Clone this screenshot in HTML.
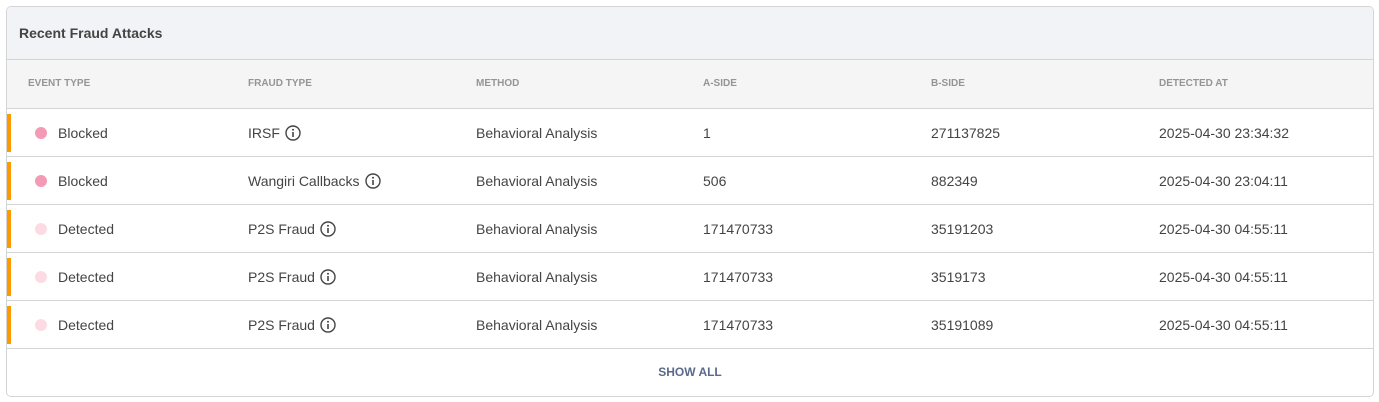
<!DOCTYPE html><html><head><style>
body{margin:0;background:#fff;font-family:"Liberation Sans",sans-serif;}
.card{position:absolute;left:6px;top:6px;width:1366px;height:389px;border:1px solid #d4d4d4;border-radius:5px;overflow:hidden;background:#fff}
.hd{height:52px;background:#f2f3f6;border-bottom:1px solid #d4d4d4;font-size:14px;font-weight:bold;color:#444;line-height:52px;padding-left:12px}
.th{position:relative;height:48px;background:#f5f5f5;border-bottom:1px solid #d4d4d4;font-size:10px;font-weight:bold;color:#959595}
.th span,.r span{position:absolute;top:0;line-height:48px}
.r{position:relative;height:47px;border-bottom:1px solid #d4d4d4;font-size:14px;color:#444}
.bar{position:absolute;left:0;top:5px;width:4px;height:38px;background:#f90}
.dot{position:absolute;left:28px;top:18px;width:12px;height:12px;border-radius:50%}
.i{display:inline-block;vertical-align:-3px;margin-left:5px}
.ft{text-align:center;line-height:46px;font-size:12px;font-weight:bold;color:#5a6a8a}
</style></head><body><div class="card">
<div class="hd">Recent Fraud Attacks</div>
<div class="th"><span style="left:21px">EVENT TYPE</span><span style="left:241px">FRAUD TYPE</span><span style="left:469px">METHOD</span><span style="left:696px">A-SIDE</span><span style="left:924px">B-SIDE</span><span style="left:1152px">DETECTED AT</span></div>
<svg width="0" height="0" style="position:absolute"><defs><symbol id="ic" viewBox="0 0 16 16"><circle cx="8" cy="8" r="7" fill="none" stroke="#444" stroke-width="1.4"/><circle cx="8" cy="4.8" r="1" fill="#444"/><path d="M8 7v5" stroke="#444" stroke-width="1.6"/></symbol></defs></svg>
<div class="r"><div class="bar"></div><div class="dot" style="background:#f59ab5"></div><span style="left:51px">Blocked</span><span style="left:241px">IRSF<svg class="i" width="16" height="16"><use href="#ic"/></svg></span><span style="left:469px">Behavioral Analysis</span><span style="left:696px">1</span><span style="left:924px">271137825</span><span style="left:1152px">2025-04-30 23:34:32</span></div>
<div class="r"><div class="bar"></div><div class="dot" style="background:#f59ab5"></div><span style="left:51px">Blocked</span><span style="left:241px">Wangiri Callbacks<svg class="i" width="16" height="16"><use href="#ic"/></svg></span><span style="left:469px">Behavioral Analysis</span><span style="left:696px">506</span><span style="left:924px">882349</span><span style="left:1152px">2025-04-30 23:04:11</span></div>
<div class="r"><div class="bar"></div><div class="dot" style="background:#fcdbe5"></div><span style="left:51px">Detected</span><span style="left:241px">P2S Fraud<svg class="i" width="16" height="16"><use href="#ic"/></svg></span><span style="left:469px">Behavioral Analysis</span><span style="left:696px">171470733</span><span style="left:924px">35191203</span><span style="left:1152px">2025-04-30 04:55:11</span></div>
<div class="r"><div class="bar"></div><div class="dot" style="background:#fcdbe5"></div><span style="left:51px">Detected</span><span style="left:241px">P2S Fraud<svg class="i" width="16" height="16"><use href="#ic"/></svg></span><span style="left:469px">Behavioral Analysis</span><span style="left:696px">171470733</span><span style="left:924px">3519173</span><span style="left:1152px">2025-04-30 04:55:11</span></div>
<div class="r"><div class="bar"></div><div class="dot" style="background:#fcdbe5"></div><span style="left:51px">Detected</span><span style="left:241px">P2S Fraud<svg class="i" width="16" height="16"><use href="#ic"/></svg></span><span style="left:469px">Behavioral Analysis</span><span style="left:696px">171470733</span><span style="left:924px">35191089</span><span style="left:1152px">2025-04-30 04:55:11</span></div>
<div class="ft">SHOW ALL</div>
</div></body></html>
